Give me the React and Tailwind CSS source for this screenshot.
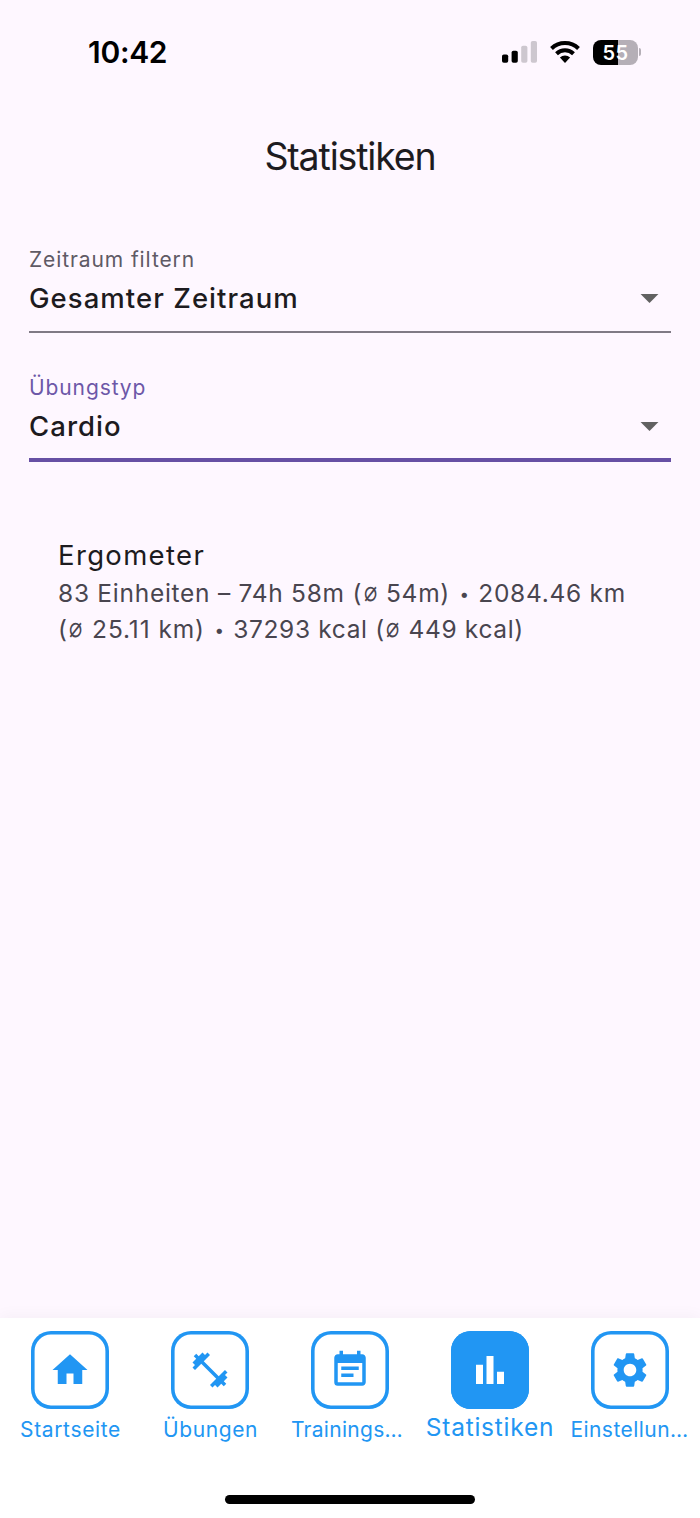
import React from "react";
import {
  MdHome,
  MdFitnessCenter,
  MdEventNote,
  MdBarChart,
  MdSettings,
  MdArrowDropDown,
} from "react-icons/md";

function StatusBar() {
  return (
    <div className="flex h-[104px] items-center justify-between pr-[58px] pl-[88px] text-black">
      <span className="text-[30px] leading-[36px] font-semibold tracking-[-0.3px]">10:42</span>
      <div className="flex items-center">
        <svg className="h-[24px] w-[36px]" viewBox="0 0 36 24">
          <rect x="0" y="14.4" width="6.2" height="8.4" rx="1.8" fill="#000" />
          <rect x="9.6" y="10.8" width="6.2" height="12" rx="1.8" fill="#000" />
          <rect x="19.2" y="5.8" width="6.2" height="17" rx="1.8" fill="#cdc7cf" />
          <rect x="28.8" y="1" width="6.2" height="21.8" rx="1.8" fill="#cdc7cf" />
        </svg>
        <svg className="ml-[12px] h-[22px] w-[30px]" viewBox="0 0 30 22">
          <path d="M1.5 7.5A19.5 19.5 0 0 1 28.5 7.5" fill="none" stroke="#000" strokeWidth="4" />
          <path d="M6.5 12.7A12.2 12.2 0 0 1 23.5 12.7" fill="none" stroke="#000" strokeWidth="4" />
          <path d="M15 22L9.9 16.6A7.3 7.3 0 0 1 20.1 16.6Z" fill="#000" />
        </svg>
        <div className="ml-[13px] flex items-center">
          <div className="flex h-[25px] w-[45px] items-center justify-center rounded-[8px] bg-[linear-gradient(to_right,#000_55%,#b5afb7_55%)] pt-[1px] text-[20px] leading-[24px] font-semibold tracking-[0.5px] text-white">
            55
          </div>
          <div className="mr-[1px] ml-[1px] h-[8px] w-[2px] rounded-r-full bg-[#b5afb7]" />
        </div>
      </div>
    </div>
  );
}

function SelectField({ label, value, active }) {
  return (
    <div className="flex h-[128px] flex-col">
      <div
        className={
          "h-[30px] text-[21px] leading-[30px] tracking-[0.9px] " +
          (active ? "text-[#6d57a8]" : "text-[#5f5a65]")
        }
      >
        {label}
      </div>
      <div className="flex h-[46px] items-center justify-between">
        <span className="text-[27.5px] leading-[46px] font-medium tracking-[1.05px] text-[#1d1b20]">
          {value}
        </span>
        <MdArrowDropDown className="mb-[2px] size-[43px] text-[#616161]" />
      </div>
      <div
        className={
          active ? "mt-[9px] h-[4px] bg-[#6750a4]" : "mt-[10px] h-[2px] bg-[#807a85]"
        }
      />
    </div>
  );
}

const tabs = [
  { label: "Startseite", Icon: MdHome, spacing: "tracking-[0.65px] ml-[1px]" },
  { label: "Übungen", Icon: MdFitnessCenter, spacing: "tracking-[0.6px] ml-[1px]" },
  { label: "Trainings…", Icon: MdEventNote, spacing: "tracking-[0.3px] mr-[6px]" },
  { label: "Statistiken", Icon: MdBarChart, spacing: "tracking-[0.75px]", selected: true },
  { label: "Einstellun…", Icon: MdSettings, spacing: "tracking-[0.45px] mr-[1px]" },
];

function TabBar() {
  return (
    <nav className="flex h-[200px] flex-col items-center bg-white shadow-[0_-3px_14px_rgba(0,0,0,0.035)]">
      <div className="flex w-full flex-1 pt-[13px]">
        {tabs.map(({ label, Icon, spacing, selected }) => (
          <div key={label} className="flex w-[140px] flex-col items-center text-[#2196f3]">
            <div
              className={
                "flex size-[78px] items-center justify-center rounded-[20px] shadow-[inset_0_0_0_3.6px_#2196f3] " +
                (selected ? "bg-[#2196f3] text-white" : "bg-white")
              }
            >
              <Icon className="size-[42px] shrink-0" />
            </div>
            <span
              className={
                "whitespace-nowrap " +
                spacing +
                (selected
                  ? " mt-[3px] text-[24.5px] leading-[30px]"
                  : " mt-[6px] text-[21px] leading-[30px]")
              }
            >
              {label}
            </span>
          </div>
        ))}
      </div>
      <div className="mb-[14px] h-[9px] w-[250px] rounded-full bg-black" />
    </nav>
  );
}

function Diameter() {
  return (
    <span className="ml-[0.5px] inline-block -translate-y-[2px] scale-x-90 scale-y-115">⌀</span>
  );
}

function Bullet() {
  return (
    <span className="mx-[2px] inline-block w-[9px] text-center align-[2px] text-[17px] leading-none tracking-normal">
      •
    </span>
  );
}

export default function App() {
  return (
    <div className="flex h-[1518px] w-[700px] flex-col overflow-hidden bg-[#fef7ff] font-['Inter',sans-serif]">
      <StatusBar />
      <h1 className="h-[104px] text-center text-[37.5px] leading-[105px] tracking-[-1.15px] text-[#1d1b20]">
        Statistiken
      </h1>
      <main className="flex flex-1 flex-col px-[29px] pt-[37px]">
        <SelectField label="Zeitraum filtern" value="Gesamter Zeitraum" />
        <SelectField label="Übungstyp" value="Cardio" active />
        <div className="px-[29px] pt-[32px]">
          <h2 className="text-[27.5px] leading-[44px] tracking-[1.35px] text-[#1d1b20]">
            Ergometer
          </h2>
          <p className="-mt-[2px] text-[24.5px] leading-[36px] tracking-[0.73px] whitespace-nowrap text-[#49454f]">
            83 Einheiten – 74h 58m (<Diameter /> 54m) <Bullet /> 2084.46 km
            <br />
            <span className="tracking-[0.9px]">
              (<Diameter /> 25.11 km)
            </span>{" "}
            <Bullet />{" "}
            <span className="tracking-[0.65px]">
              37293 kcal (<Diameter /> 449 kcal)
            </span>
          </p>
        </div>
      </main>
      <TabBar />
    </div>
  );
}
